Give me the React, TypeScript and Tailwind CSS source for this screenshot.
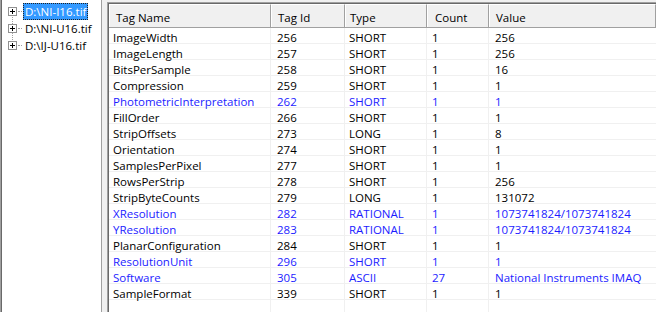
import React from "react";

type Row = { name: string; id: string; type: string; count: string; value: string; blue?: boolean };

const rows: Row[] = [
  { name: "ImageWidth", id: "256", type: "SHORT", count: "1", value: "256" },
  { name: "ImageLength", id: "257", type: "SHORT", count: "1", value: "256" },
  { name: "BitsPerSample", id: "258", type: "SHORT", count: "1", value: "16" },
  { name: "Compression", id: "259", type: "SHORT", count: "1", value: "1" },
  { name: "PhotometricInterpretation", id: "262", type: "SHORT", count: "1", value: "1", blue: true },
  { name: "FillOrder", id: "266", type: "SHORT", count: "1", value: "1" },
  { name: "StripOffsets", id: "273", type: "LONG", count: "1", value: "8" },
  { name: "Orientation", id: "274", type: "SHORT", count: "1", value: "1" },
  { name: "SamplesPerPixel", id: "277", type: "SHORT", count: "1", value: "1" },
  { name: "RowsPerStrip", id: "278", type: "SHORT", count: "1", value: "256" },
  { name: "StripByteCounts", id: "279", type: "LONG", count: "1", value: "131072" },
  { name: "XResolution", id: "282", type: "RATIONAL", count: "1", value: "1073741824/1073741824", blue: true },
  { name: "YResolution", id: "283", type: "RATIONAL", count: "1", value: "1073741824/1073741824", blue: true },
  { name: "PlanarConfiguration", id: "284", type: "SHORT", count: "1", value: "1" },
  { name: "ResolutionUnit", id: "296", type: "SHORT", count: "1", value: "1", blue: true },
  { name: "Software", id: "305", type: "ASCII", count: "27", value: "National Instruments IMAQ", blue: true },
  { name: "SampleFormat", id: "339", type: "SHORT", count: "1", value: "1" },
];

function PlusBox() {
  return (
    <div className="relative w-[9px] h-[9px] border border-[#919191] bg-white shrink-0">
      <div className="absolute left-[1px] top-[3px] w-[5px] h-[1px] bg-black" />
      <div className="absolute left-[3px] top-[1px] w-[1px] h-[5px] bg-black" />
    </div>
  );
}

function TreeItem({ label, selected }: { label: string; selected?: boolean }) {
  return (
    <div className="h-[17px] flex items-center">
      <div className="w-[6px] shrink-0" />
      <PlusBox />
      <div className="w-[4px] h-0 border-t border-dotted border-[#a0a0a0] mx-[1px] shrink-0" />
      <div
        className={
          selected
            ? "h-[17px] px-[2px] flex items-center bg-[#3399ff] text-white outline outline-1 outline-dotted outline-[#222] -outline-offset-1 whitespace-nowrap"
            : "h-[17px] px-[2px] flex items-center text-black whitespace-nowrap"
        }
      >
        <span className="leading-none">{label}</span>
      </div>
    </div>
  );
}

const cols = "grid grid-cols-[162px_74px_82px_62px_1fr]";

export default function App() {
  return (
    <div
      className="w-[656px] h-[312px] bg-[#f0f0f0] flex overflow-hidden text-[11.5px]"
      style={{ fontFamily: '"Open Sans", "Noto Sans", sans-serif' }}
    >
      {/* Tree panel */}
      <div className="w-[102px] h-full bg-white border-l border-[#a0a0a0] border-r border-r-[#a0a0a0] overflow-hidden">
        <div className="h-full border-l border-[#696969] pt-[3px] relative">
          <div className="absolute left-[10px] top-[17px] h-[27px] w-0 border-l border-dotted border-[#a0a0a0]" />
          <TreeItem label="D:\NI-I16.tif" selected />
          <TreeItem label="D:\NI-U16.tif" />
          <TreeItem label="D:\IJ-U16.tif" />
        </div>
      </div>

      {/* splitter */}
      <div className="w-[5px] h-full" />

      {/* List panel */}
      <div className="flex-1 h-full pt-[2px]">
        <div className="h-full border-t border-l border-[#a0a0a0]">
          <div className="h-full border-t border-l border-[#696969] bg-white flex flex-col">
            {/* header */}
            <div className={`${cols} h-[24px] shrink-0 border-b border-[#a0a0a0]`}>
              {[
                ["Tag Name", "pl-[6px]"],
                ["Tag Id", "pl-[6px]"],
                ["Type", "pl-[4px]"],
                ["Count", "pl-[7px]"],
                ["Value", "pl-[6px]"],
              ].map(([t, p]) => (
                <div
                  key={t}
                  className={`${p} pt-[5px] leading-[15px] bg-[#f0f0f0] border-t border-l border-white border-r border-r-[#a0a0a0] text-black`}
                >
                  {t}
                </div>
              ))}
            </div>
            {/* rows */}
            {rows.map((r) => (
              <div
                key={r.name}
                className={`${cols} h-[16px] shrink-0 border-b border-[#f0f0f0] leading-[14px] ${
                  r.blue ? "text-[#1c1cff]" : "text-black"
                }`}
              >
                <div className="pl-[4px] pt-[3px] border-r border-[#f0f0f0] whitespace-nowrap">{r.name}</div>
                <div className="pl-[6px] pt-[3px] border-r border-[#f0f0f0]">{r.id}</div>
                <div className="pl-[4px] pt-[3px] border-r border-[#f0f0f0]">{r.type}</div>
                <div className="pl-[5px] pt-[3px] border-r border-[#f0f0f0]">{r.count}</div>
                <div className="pl-[6px] pt-[3px] whitespace-nowrap">{r.value}</div>
              </div>
            ))}
            <div className={`${cols} flex-1`}>
              <div className="border-r border-[#f0f0f0]" />
              <div className="border-r border-[#f0f0f0]" />
              <div className="border-r border-[#f0f0f0]" />
              <div className="border-r border-[#f0f0f0]" />
              <div />
            </div>
          </div>
        </div>
      </div>
    </div>
  );
}
